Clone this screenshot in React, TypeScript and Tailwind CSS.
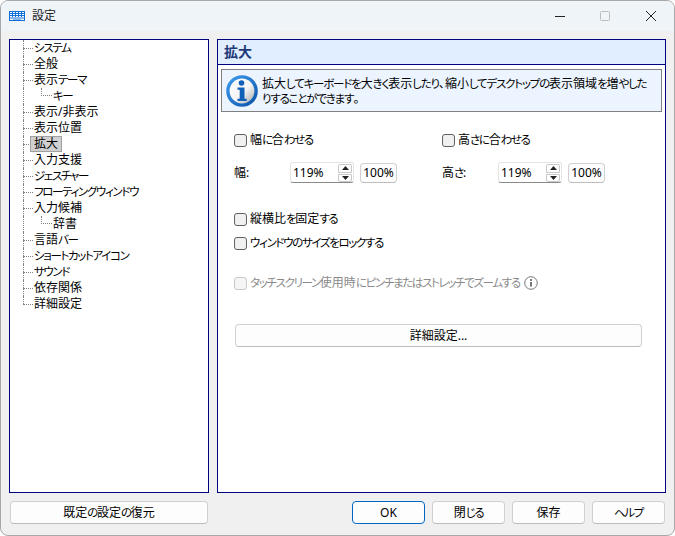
import type { ReactNode } from "react";

const treeItems: { label: string; sub?: boolean; selected?: boolean; last?: boolean }[] = [
  { label: "システム" },
  { label: "全般" },
  { label: "表示テーマ" },
  { label: "キー", sub: true },
  { label: "表示/非表示" },
  { label: "表示位置" },
  { label: "拡大", selected: true },
  { label: "入力支援" },
  { label: "ジェスチャー" },
  { label: "フローティングウィンドウ" },
  { label: "入力候補" },
  { label: "辞書", sub: true },
  { label: "言語バー" },
  { label: "ショートカット アイコン" },
  { label: "サウンド" },
  { label: "依存関係" },
  { label: "詳細設定", last: true },
];

// kana sits narrower than kanji in the reference's UI font
function Jp({ text, loose }: { text: string; loose?: boolean }) {
  return (
    <>
      {text.split(/([\u3040-\u30ff]+)/).map((part, i) =>
        i % 2 === 1 ? (
          <span key={i} className={loose ? "text-[11.5px] tracking-[-1.2px]" : "text-[11.5px] tracking-[-1.35px]"}>
            {part}
          </span>
        ) : (
          part
        ),
      )}
    </>
  );
}

function TreeRow({ label, sub, selected, last }: (typeof treeItems)[number]) {
  return (
    <div className="flex h-4 items-stretch pl-[13px]">
      <div className={sub ? "relative w-[30px] shrink-0" : "relative w-[11px] shrink-0"}>
        <div className={last ? "h-2 border-l border-dotted border-[#808080]" : "h-4 border-l border-dotted border-[#808080]"} />
        {sub && (
          <div className="absolute top-0 left-[18px] h-2 w-[11px] border-b border-l border-dotted border-[#808080]" />
        )}
        {!sub && <div className="absolute top-2 left-0 w-[10px] border-t border-dotted border-[#808080]" />}
      </div>
      <div
        className={
          selected
            ? "relative -ml-[4px] flex items-center border border-[#a0a0a0] bg-[#d0d0d0] px-[3px]"
            : "flex items-center whitespace-pre"
        }
      >
        <Jp text={label} />
      </div>
    </div>
  );
}

function Check({ label, disabled, className }: { label: string; disabled?: boolean; className?: string }) {
  return (
    <div className={`flex items-center gap-[3px] ${className ?? ""}`}>
      <span
        className={
          disabled
            ? "h-[13px] w-[13px] rounded-[3px] border border-[#c8c8c8] bg-[#f5f5f5]"
            : "h-[13px] w-[13px] rounded-[3px] border border-[#606060] bg-[#f0f0f0]"
        }
      />
      <span className={disabled ? "text-[#8a8a8a]" : ""}>
        <Jp text={label} />
      </span>
    </div>
  );
}

function Btn({ children, className, primary }: { children: ReactNode; className?: string; primary?: boolean }) {
  return (
    <button
      className={`flex h-[23px] items-center justify-center rounded-[4px] border bg-[#fdfdfd] ${
        primary ? "border-[#0067c0]" : "border-[#d0d0d0] border-b-[#bcbcbc]"
      } ${className ?? ""}`}
    >
      {children}
    </button>
  );
}

function Spin() {
  return (
    <div className="flex h-[21px] w-[64px] items-center justify-between rounded-[3px] border border-[#e4e4e4] border-b-[#8a8a8a] bg-white pr-[1px] pl-[2px]">
      <span>119%</span>
      <div className="flex w-[14px] flex-col gap-[1px]">
        <div className="flex h-[9px] items-center justify-center rounded-t-[2px] border border-[#c8c8c8]">
          <svg width="7" height="4" viewBox="0 0 7 4"><path d="M3.5 0L7 4H0z" fill="#222" /></svg>
        </div>
        <div className="flex h-[8px] items-center justify-center rounded-b-[2px] border border-[#c8c8c8]">
          <svg width="7" height="4" viewBox="0 0 7 4"><path d="M0 0h7L3.5 4z" fill="#222" /></svg>
        </div>
      </div>
    </div>
  );
}

function SizeField({ label, className }: { label: string; className?: string }) {
  return (
    <div className={`flex items-center ${className ?? ""}`}>
      <span className="w-[56px]">
        <Jp text={label} />
      </span>
      <Spin />
      <Btn className="ml-[6px] !h-[20px] w-[37px]">100%</Btn>
    </div>
  );
}

function KeyboardIcon() {
  return (
    <svg width="16" height="10" viewBox="0 0 16 10" fill="none">
      <rect x="0.5" y="0.5" width="15" height="9" fill="#fff" stroke="#0f6fd6" />
      <path d="M3.5 1v5M6.5 1v5M9.5 1v5M12.5 1v5M1 2.5h14M1 4.5h14" stroke="#0f6fd6" />
      <path d="M1 7h14" stroke="#0f6fd6" />
      <path d="M4 8.5h8" stroke="#7db4ec" />
    </svg>
  );
}

function InfoIcon() {
  return (
    <svg width="32" height="32" viewBox="0 0 32 32">
      <defs>
        <linearGradient id="ring" x1="0" y1="0" x2="1" y2="1">
          <stop offset="0" stopColor="#3f9ff0" />
          <stop offset="1" stopColor="#0a50a8" />
        </linearGradient>
        <linearGradient id="face" x1="0" y1="0" x2="1" y2="1">
          <stop offset="0" stopColor="#ffffff" />
          <stop offset="0.55" stopColor="#f4f4f4" />
          <stop offset="1" stopColor="#a8a8a8" />
        </linearGradient>
      </defs>
      <circle cx="16" cy="16" r="15.8" fill="url(#ring)" />
      <circle cx="16" cy="16" r="12.4" fill="url(#face)" />
      <circle cx="15.5" cy="8" r="2.8" fill="#1160b8" />
      <path d="M11.5 12.5h7v11.2h2.2V26h-9.2v-2.3h2.2v-8.9h-2.2z" fill="#1160b8" />
    </svg>
  );
}

export default function App() {
  return (
    <div className="flex h-[536px] w-[675px] flex-col overflow-hidden rounded-lg border border-[#a8a8a8] bg-[#f0f0f0] text-[12px] leading-4 text-black [font-family:'Noto_Sans','Noto_Sans_CJK_JP',sans-serif] [font-feature-settings:'palt']">
      {/* Title bar */}
      <div className="flex h-[30px] shrink-0 items-center bg-[#eff4f9] pl-[8px]">
        <KeyboardIcon />
        <span className="ml-[7px] text-[#222]">設定</span>
        <div className="ml-auto flex items-center">
          <svg width="10" height="10" viewBox="0 0 10 10" className="mr-[35px]"><path d="M0 5.5h10" stroke="#222" /></svg>
          <svg width="10" height="10" viewBox="0 0 10 10" className="mr-[36px]"><rect x="0.5" y="0.5" width="9" height="9" rx="1" fill="none" stroke="#bbb" /></svg>
          <svg width="10" height="10" viewBox="0 0 10 10" className="mr-[18px]"><path d="M0 0l10 10M10 0L0 10" stroke="#222" /></svg>
        </div>
      </div>

      {/* Panels */}
      <div className="flex min-h-0 flex-1 gap-[8px] pt-[8px] pl-[8px]">
        <div className="h-[454px] w-[200px] border border-[#000080] bg-white">
          {treeItems.map((item) => (
            <TreeRow key={item.label} {...item} />
          ))}
        </div>

        <div className="flex h-[454px] w-[449px] flex-col border border-[#000080] bg-white">
          <div className="flex h-[25px] items-center border-b border-[#000080] bg-[#e0eeff] pl-[6px] text-[14px] font-bold text-[#1f3a7a]">
            拡大
          </div>
          <div className="mx-[3px] mt-[4px] flex h-[43px] items-center border border-[#808080] bg-[#ecf4ff] pl-[4px]">
            <InfoIcon />
            <p className="ml-[4px] leading-[15px] whitespace-nowrap">
              <Jp loose text="拡大してキーボードを大きく表示したり、縮小してデスクトップの表示領域を増やした" />
              <br />
              <Jp loose text="りすることができます。" />
            </p>
          </div>

          <div className="flex flex-col pl-[16px]">
            <div className="mt-[20px] flex">
              <Check label="幅に合わせる" className="w-[208px]" />
              <Check label="高さに合わせる" />
            </div>
            <div className="mt-[14px] flex">
              <SizeField label="幅:" className="w-[208px]" />
              <SizeField label="高さ:" />
            </div>
            <Check label="縦横比を固定する" className="mt-[28px]" />
            <Check label="ウィンドウのサイズをロックする" className="mt-[8px]" />
            <div className="mt-[24px] flex items-center">
              <Check label="タッチスクリーン使用時にピンチまたはストレッチでズームする" disabled />
              <svg width="14" height="14" viewBox="0 0 14 14" className="ml-[4px]">
                <circle cx="7" cy="7" r="6.3" fill="none" stroke="#777" />
                <circle cx="7" cy="4" r="1" fill="#555" />
                <path d="M7 6v4.5" stroke="#555" strokeWidth="1.6" />
              </svg>
            </div>
            <Btn className="mt-[33px] ml-[1px] w-[407px]">詳細設定...</Btn>
          </div>
        </div>
      </div>

      {/* Footer */}
      <div className="flex h-[43px] shrink-0 items-start pt-[9px] pl-[9px]">
        <Btn className="w-[198px]">
          <Jp text="既定の設定の復元" />
        </Btn>
        <div className="ml-[144px] flex gap-[7px]">
          <Btn primary className="w-[73px]">OK</Btn>
          <Btn className="w-[73px]"><Jp text="閉じる" /></Btn>
          <Btn className="w-[73px]">保存</Btn>
          <Btn className="w-[73px]"><Jp text="ヘルプ" /></Btn>
        </div>
      </div>
    </div>
  );
}
